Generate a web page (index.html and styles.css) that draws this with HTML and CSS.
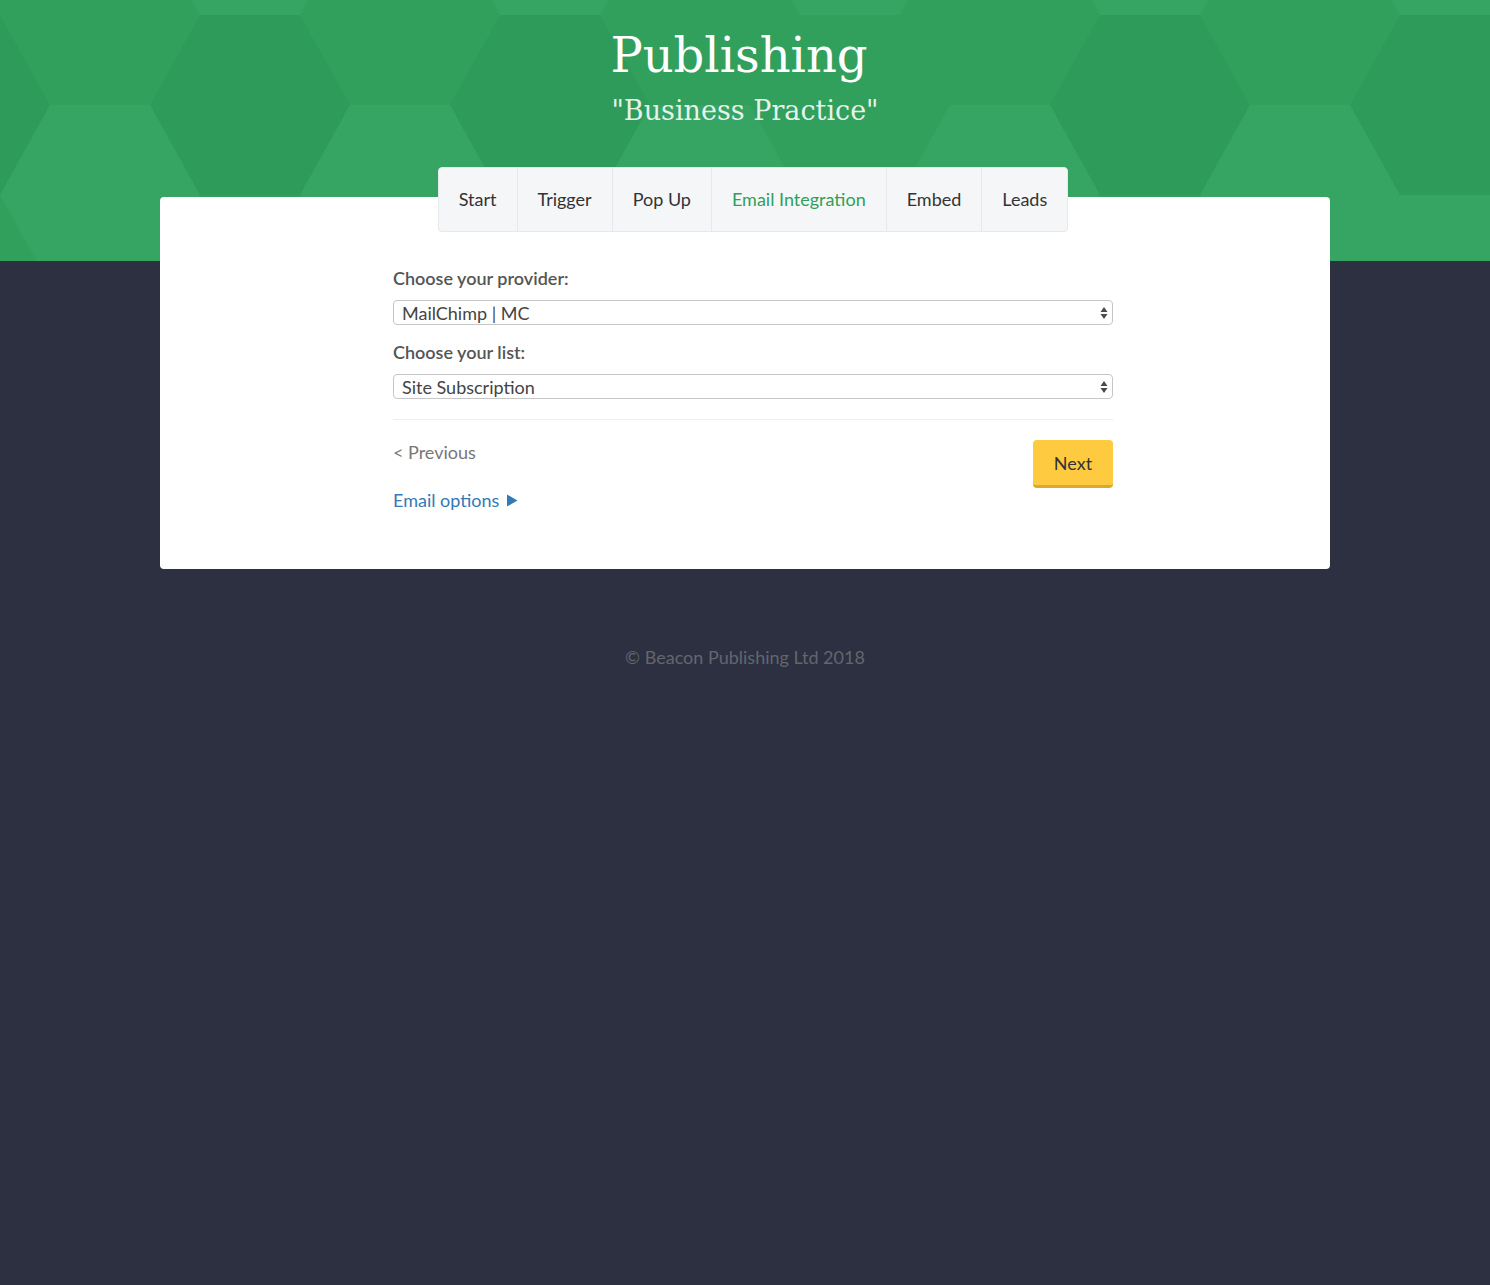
FILE: index.html
```html
<!DOCTYPE HTML>
<html>
	<head>
		<meta charset="utf-8"/>
		<title>Publishing - Email Integration</title>
		<link rel="stylesheet" href="styles.css">
	</head>
	<body>
		<header class="hero">
			<svg class="hex-bg" width="1490" height="261" viewBox="0 0 1490 261">
				<defs>
					<polygon id="hex" points="-50,-90 50,-90 100,0 50,90 -50,90 -100,0"/>
				</defs>
				<rect width="1490" height="261" fill="#31a05d"/>
				<!-- top row -->
				<use href="#hex" x="250" y="-75" fill="#36a462"/>
				<use href="#hex" x="550" y="-75" fill="#36a462"/>
				<use href="#hex" x="850" y="-75" fill="#36a462"/>
				<use href="#hex" x="1150" y="-75" fill="#36a462"/>
				<use href="#hex" x="1450" y="-75" fill="#36a462"/>
				<!-- middle row -->
				<use href="#hex" x="-50" y="105" fill="#2e9b5a"/>
				<use href="#hex" x="250" y="105" fill="#2e9b5a"/>
				<use href="#hex" x="550" y="105" fill="#2e9b5a"/>
				<use href="#hex" x="1150" y="105" fill="#2e9b5a"/>
				<use href="#hex" x="1450" y="105" fill="#2e9b5a"/>
				<!-- lower row -->
				<use href="#hex" x="100" y="195" fill="#36a462"/>
				<use href="#hex" x="400" y="195" fill="#36a462"/>
				<use href="#hex" x="700" y="195" fill="#36a462"/>
				<use href="#hex" x="1000" y="195" fill="#36a462"/>
				<use href="#hex" x="1300" y="195" fill="#36a462"/>
				<use href="#hex" x="1450" y="285" fill="#36a462"/>
			</svg>
			<h1 class="title">Publishing</h1>
			<p class="subtitle">"Business Practice"</p>
		</header>

		<main class="panel">
			<div class="wizard">
				<nav class="tabs">
					<a class="tab" href="#">Start</a>
					<a class="tab" href="#">Trigger</a>
					<a class="tab" href="#">Pop Up</a>
					<a class="tab active" href="#">Email Integration</a>
					<a class="tab" href="#">Embed</a>
					<a class="tab" href="#">Leads</a>
				</nav>

				<form class="form">
					<label class="label" for="provider">Choose your provider:</label>
					<div class="select-wrap">
						<select id="provider" class="select">
							<option>MailChimp | MC</option>
						</select>
						<svg class="select-arrows" width="8" height="14" viewBox="0 0 8 14"><path d="M4 1 L7.5 6 H0.5 Z M4 13 L7.5 8 H0.5 Z" fill="#4a4a4a"/></svg>
					</div>

					<label class="label" for="list">Choose your list:</label>
					<div class="select-wrap">
						<select id="list" class="select">
							<option>Site Subscription</option>
						</select>
						<svg class="select-arrows" width="8" height="14" viewBox="0 0 8 14"><path d="M4 1 L7.5 6 H0.5 Z M4 13 L7.5 8 H0.5 Z" fill="#4a4a4a"/></svg>
					</div>

					<hr class="divider">

					<div class="actions">
						<div class="links">
							<a class="prev" href="#">&lt; Previous</a>
							<a class="options" href="#">Email options <svg width="12" height="13" viewBox="0 0 12 13"><path d="M1 0.5 L11.5 6.5 L1 12.5 Z" fill="#337ab7"/></svg></a>
						</div>
						<button type="button" class="btn-next">Next</button>
					</div>
				</form>
			</div>
		</main>

		<footer class="footer">&copy; Beacon Publishing Ltd 2018</footer>
	</body>
</html>
```

FILE: styles.css
```css
body{margin:0;background:#2d3040;font-family:Lato,"Open Sans",sans-serif;color:#333;}
a{text-decoration:none;}

.hero{position:relative;height:261px;overflow:hidden;text-align:center;color:#fff;}
.hex-bg{position:absolute;top:0;left:0;z-index:0;}
.title{position:relative;margin:0;padding:24px 12px 0 0;font-family:"DejaVu Serif",serif;font-weight:normal;font-size:48px;line-height:62px;}
.subtitle{position:relative;margin:8px 0 0;font-family:"DejaVu Serif",serif;font-size:27px;line-height:34px;color:rgba(255,255,255,0.88);}

.panel{display:flow-root;position:relative;width:1170px;margin:-64px auto 0;background:#fff;border-radius:4px;padding-bottom:59px;}
.wizard{width:720px;margin-left:233px;}

.tabs{display:flex;width:fit-content;margin:-30px auto 0;background:#f5f6f8;border:1px solid #e6e8eb;border-radius:4px;}
.tab{padding:0 20px;height:63px;line-height:63px;font-size:18px;color:#333;border-left:1px solid #e6e8eb;}
.tab:first-child{border-left:none;}
.tab.active{color:#2f9f5b;}

.form{padding-top:36px;}
.label{display:block;font-size:18px;font-weight:600;color:#555;line-height:20px;margin-bottom:12px;}
.select-wrap{position:relative;margin-bottom:17px;}
.select{display:block;width:100%;height:25px;padding:0 8px;font-family:inherit;font-size:18px;color:#444;background:#fff;border:1px solid #c6c6c6;border-radius:4px;-webkit-appearance:none;appearance:none;}
.select-arrows{position:absolute;right:5px;top:6px;pointer-events:none;}

.divider{border:0;border-top:1px solid #eee;margin:20px 0;}

.actions{display:flex;justify-content:space-between;align-items:flex-start;}
.links{display:flex;flex-direction:column;gap:28px;padding-top:2px;}
.prev{font-size:18px;color:#777;line-height:20px;}
.options{font-size:18px;color:#337ab7;line-height:20px;display:flex;align-items:center;gap:7px;}

.btn-next{width:80px;height:48px;font-family:inherit;font-size:18px;color:#333;background:#fdca40;border:0;border-bottom:3px solid #d8ab2c;border-radius:4px;}

.footer{margin-top:77px;text-align:center;font-size:18px;color:#62666f;}
```
